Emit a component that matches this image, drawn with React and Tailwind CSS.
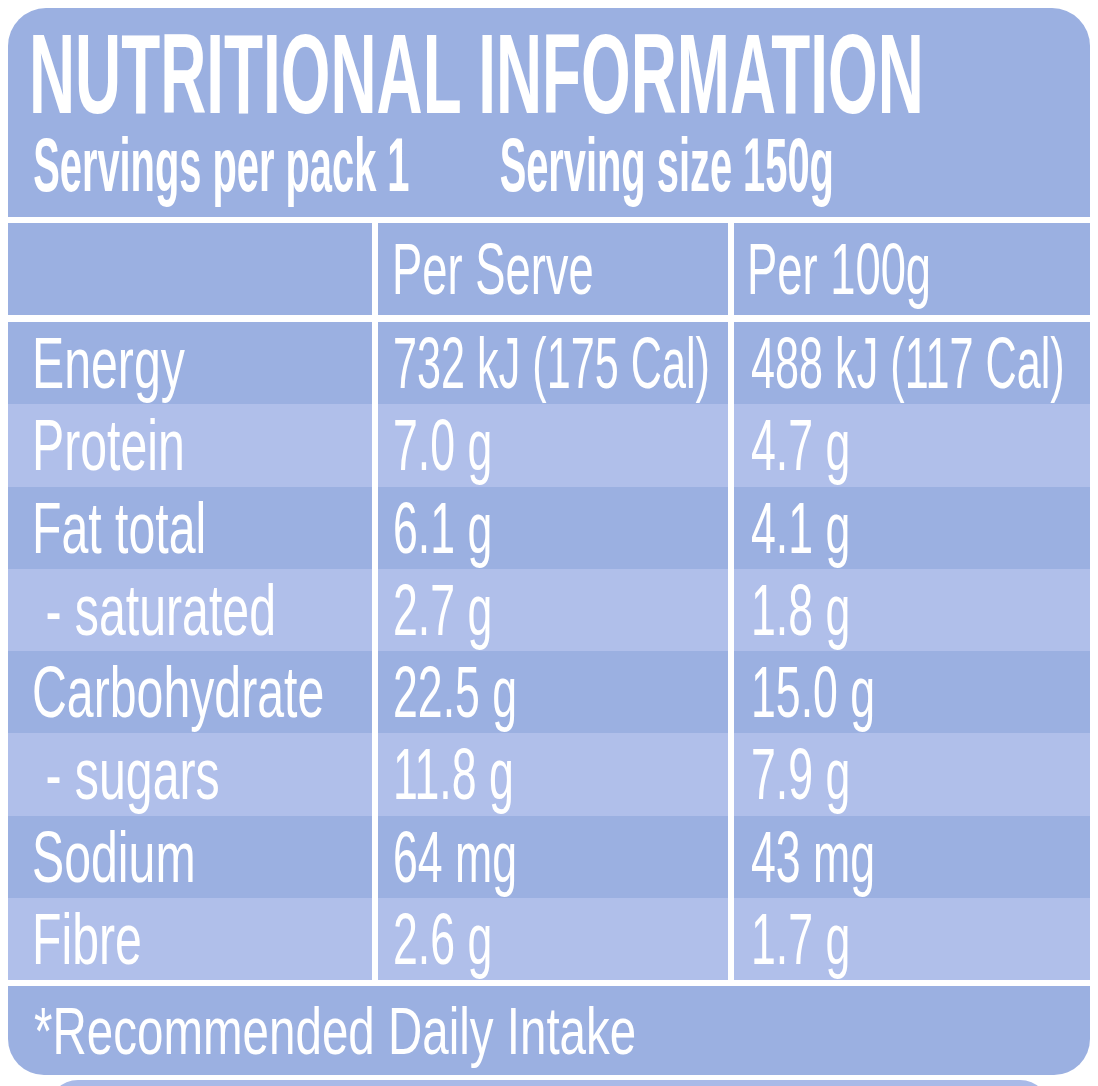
const rows = [
  { label: 'Energy', serve: '732 kJ (175 Cal)', per100: '488 kJ (117 Cal)', tone: 'dark', tight: true },
  { label: 'Protein', serve: '7.0 g', per100: '4.7 g', tone: 'light' },
  { label: 'Fat total', serve: '6.1 g', per100: '4.1 g', tone: 'dark' },
  { label: ' - saturated', serve: '2.7 g', per100: '1.8 g', tone: 'light' },
  { label: 'Carbohydrate', serve: '22.5 g', per100: '15.0 g', tone: 'dark' },
  { label: ' - sugars', serve: '11.8 g', per100: '7.9 g', tone: 'light' },
  { label: 'Sodium', serve: '64 mg', per100: '43 mg', tone: 'dark' },
  { label: 'Fibre', serve: '2.6 g', per100: '1.7 g', tone: 'light' },
];

// condensed look: the page has no narrow font, so squeeze horizontally
const squeeze = {
  label: 'scale-x-[0.67]',
  head: 'scale-x-[0.63]',
  value: 'scale-x-[0.62]',
  tight: 'scale-x-[0.6]',
};

function Cell({ children, tone, pad = 'pl-[15px]', kind = 'value' }) {
  const bg = tone === 'light' ? 'bg-[#b0bfea]' : 'bg-[#9bb0e1]';
  return (
    <div className={`flex items-center overflow-visible ${bg} ${pad}`}>
      <span className={`inline-block origin-left whitespace-pre text-[72px] leading-none ${squeeze[kind]}`}>
        {children}
      </span>
    </div>
  );
}

export default function App() {
  return (
    <div className="min-h-screen bg-white px-[8px] pt-[8px] text-white font-['Liberation_Sans',Arial,sans-serif]">
      <div className="w-[1082px]">
        {/* Title band */}
        <div className="h-[209px] rounded-t-[38px] bg-[#9bb0e1] pl-[21px] pt-[12px]">
          <div className="origin-left scale-x-[0.56] whitespace-nowrap text-[114px] font-bold leading-[108px]">
            NUTRITIONAL INFORMATION
          </div>
          <div className="mt-[1px] origin-left scale-x-[0.524] whitespace-nowrap pl-[8px] text-[76px] font-bold leading-[72px]">
            <span>Servings per pack 1</span>
            <span className="ml-[172px]">Serving size 150g</span>
          </div>
        </div>

        {/* Column headings */}
        <div className="mt-[6px] grid h-[92px] grid-cols-[364px_350px_356px] gap-x-[6px]">
          <div className="bg-[#9bb0e1]" />
          <Cell tone="dark" kind="head" pad="pl-[14px]">Per Serve</Cell>
          <Cell tone="dark" kind="head" pad="pl-[13px]">Per 100g</Cell>
        </div>

        {/* Nutrient rows */}
        <div className="mt-[7px] flex flex-col">
          {rows.map((r) => (
            <div key={r.label} className="grid h-[82.25px] grid-cols-[364px_350px_356px] gap-x-[6px]">
              <Cell tone={r.tone} kind="label" pad="pl-[24px]">{r.label}</Cell>
              <Cell tone={r.tone} kind={r.tight ? 'tight' : 'value'} pad="pl-[15px]">{r.serve}</Cell>
              <Cell tone={r.tone} kind={r.tight ? 'tight' : 'value'} pad="pl-[17px]">{r.per100}</Cell>
            </div>
          ))}
        </div>

        {/* Footer */}
        <div className="mt-[6px] flex h-[89px] items-center rounded-b-[36px] bg-[#9bb0e1] pl-[26px]">
          <span className="inline-block origin-left scale-x-[0.72] whitespace-nowrap text-[66px] leading-none">
            *Recommended Daily Intake
          </span>
        </div>

        <div className="mx-[40px] mt-[5px] h-[40px] rounded-t-[30px] bg-[#a9bae8]" />
      </div>
    </div>
  );
}
